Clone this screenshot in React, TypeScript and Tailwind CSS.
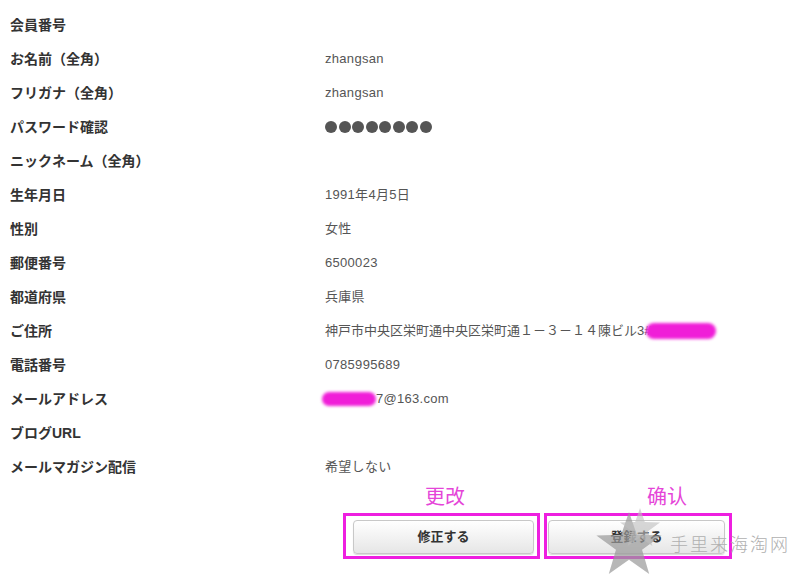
import React from "react";

const rows: { label: string; value?: React.ReactNode }[] = [
  { label: "会員番号" },
  { label: "お名前（全角）", value: "zhangsan" },
  { label: "フリガナ（全角）", value: "zhangsan" },
  { label: "パスワード確認", value: "dots" },
  { label: "ニックネーム（全角）" },
  { label: "生年月日", value: "1991年4月5日" },
  { label: "性別", value: "女性" },
  { label: "郵便番号", value: "6500023" },
  { label: "都道府県", value: "兵庫県" },
  { label: "ご住所", value: "address" },
  { label: "電話番号", value: "0785995689" },
  { label: "メールアドレス", value: "email" },
  { label: "ブログURL" },
  { label: "メールマガジン配信", value: "希望しない" },
];

const jp = { fontFamily: '"Liberation Sans", "Noto Sans CJK JP", sans-serif' };

function Scribble({ className }: { className: string }) {
  return <span className={"inline-block rounded-full bg-[#f01ed8] blur-[1.5px] " + className} />;
}

function Value({ v }: { v: React.ReactNode }) {
  if (v === "dots") {
    return (
      <div className="flex gap-[1.5px]">
        {Array.from({ length: 8 }).map((_, i) => (
          <span key={i} className="w-[12px] h-[12px] rounded-full bg-[#555]" />
        ))}
      </div>
    );
  }
  if (v === "address") {
    return (
      <div className="flex items-center tracking-normal">
        <span>神戸市中央区栄町通中央区栄町通１－３－１４陳ビル3#</span>
        <Scribble className="w-[70px] h-[16px] -ml-[5px]" />
      </div>
    );
  }
  if (v === "email") {
    return (
      <div className="flex items-center -ml-[3px]">
        <Scribble className="w-[54px] h-[14px]" />
        <span>7@163.com</span>
      </div>
    );
  }
  return <span>{v}</span>;
}

function Star({ className }: { className: string }) {
  return (
    <svg viewBox="0 0 100 95" className={className}>
      <polygon points="50,0 62,35 100,36 70,58 81,95 50,73 19,95 30,58 0,36 38,35" />
    </svg>
  );
}

export default function App() {
  return (
    <div className="relative w-[800px] h-[588px] bg-white overflow-hidden" style={jp}>
      <div className="pt-[8px]">
        {rows.map((r) => (
          <div key={r.label} className="flex items-center h-[34px]">
            <div className="w-[325px] pl-[10px] text-[14px] font-bold text-[#333]">{r.label}</div>
            <div className="text-[13px] text-[#555] tracking-[0.3px]">{r.value && <Value v={r.value} />}</div>
          </div>
        ))}
      </div>

      <div
        className="flex text-[20px] text-[#e545d8] leading-none mt-[2px]"
        style={{ fontFamily: '"Noto Sans CJK SC", sans-serif' }}
      >
        <span className="ml-[425px]">更改</span>
        <span className="ml-[182px]">确认</span>
      </div>

      <div className="flex gap-[4px] pl-[343px] mt-[7px]">
        <div className="w-[197px] h-[46px] border-[3px] border-[#ee1fe0] pl-[7px] pr-[3px] pt-[4px] pb-[2px]">
          <button className="w-full h-full rounded-[4px] border border-[#c8c8c8] bg-gradient-to-b from-white to-[#e6e6e6] text-[13px] font-bold text-[#333] shadow-[0_1px_1px_rgba(0,0,0,0.15)]">
            修正する
          </button>
        </div>
        <div className="w-[188px] h-[46px] border-[3px] border-[#ee1fe0] pl-[1px] pr-[4px] pt-[4px] pb-[2px]">
          <button className="w-full h-full rounded-[4px] border border-[#c8c8c8] bg-gradient-to-b from-white to-[#e6e6e6] text-[13px] font-bold text-[#333] shadow-[0_1px_1px_rgba(0,0,0,0.15)]">
            登録する
          </button>
        </div>
      </div>

      {/* watermark */}
      <Star className="absolute left-[596px] top-[512px] w-[66px] h-[62px] fill-[#9a9a9a] opacity-70" />
      <Star className="absolute left-[620px] top-[508px] w-[40px] h-[38px] fill-[#bdbdbd] opacity-60" />
      <div
        className="absolute left-[670px] top-[530px] text-[18px] tracking-[2px] text-[#b0b0b0] font-light"
        style={{ fontFamily: '"Noto Sans CJK SC", sans-serif' }}
      >
        手里来海淘网
      </div>
    </div>
  );
}
